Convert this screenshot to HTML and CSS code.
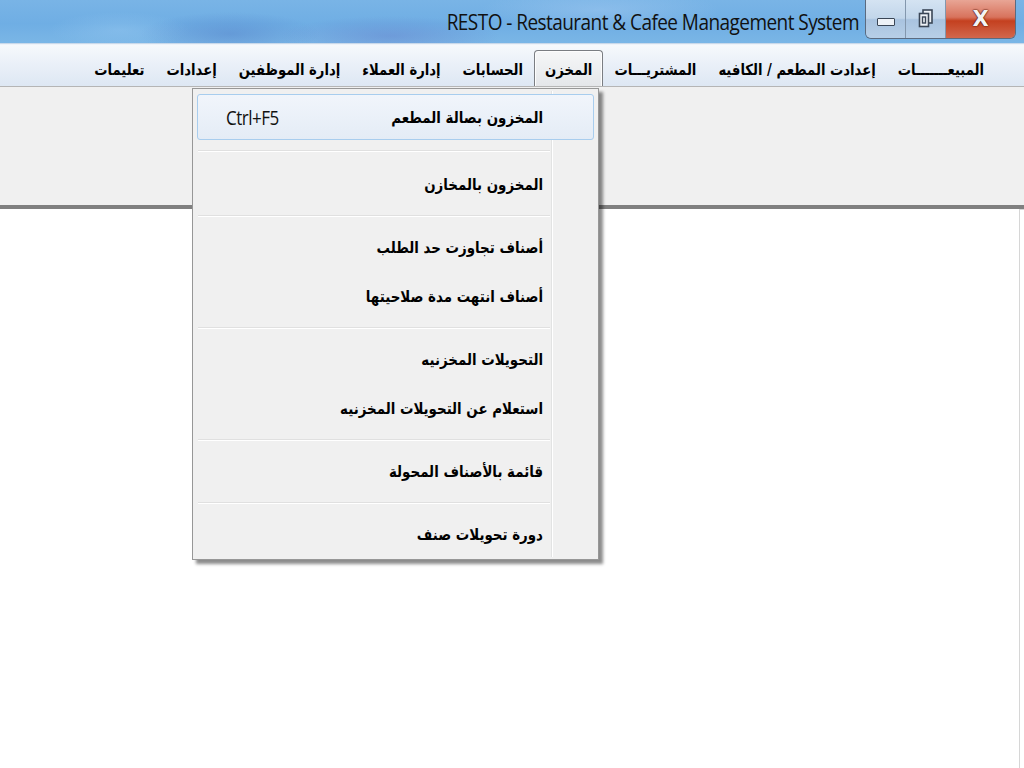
FILE: index.html
```html
<!DOCTYPE html>
<html>
<head>
<meta charset="utf-8">
<link rel="stylesheet" href="styles.css">
</head>
<body>
<div class="screen">
  <div class="titlebar">
    <div class="title">RESTO - Restaurant &amp; Cafee Management System</div>
    <div class="winbtns">
      <div class="wb wb-min"><span class="min-glyph"></span></div>
      <div class="wb wb-max">
        <svg width="16" height="20" viewBox="0 0 16 20"><rect x="5" y="1" width="9" height="13" fill="#eef2f7" stroke="#3a4656" stroke-width="1.6"/><rect x="1.5" y="4.5" width="9" height="13" fill="#eef2f7" stroke="#3a4656" stroke-width="1.6"/><rect x="4.5" y="8" width="3" height="6" fill="none" stroke="#3a4656" stroke-width="1.4"/></svg>
      </div>
      <div class="wb wb-close"><span class="x-glyph">X</span></div>
    </div>
  </div>
  <div class="menubar" dir="rtl">
    <span class="mi"><span class="mt">المبيعـــــــات</span></span>
    <span class="mi"><span class="mt">إعدادت المطعم / الكافيه</span></span>
    <span class="mi"><span class="mt">المشتريـــات</span></span>
    <span class="mi mi-active"><span class="mt">المخزن</span></span>
    <span class="mi"><span class="mt">الحسابات</span></span>
    <span class="mi"><span class="mt">إدارة العملاء</span></span>
    <span class="mi"><span class="mt">إدارة الموظفين</span></span>
    <span class="mi"><span class="mt">إعدادات</span></span>
    <span class="mi"><span class="mt">تعليمات</span></span>
  </div>
  <div class="toolarea"></div>
  <div class="content"></div>

  <div class="dropdown" dir="rtl">
    <div class="gutter"></div>
    <div class="item item-hot"><span class="lbl">المخزون بصالة المطعم</span><span class="key">Ctrl+F5</span></div>
    <div class="sep sep-a"></div>
    <div class="item"><span class="lbl">المخزون بالمخازن</span></div>
    <div class="sep"></div>
    <div class="item"><span class="lbl">أصناف تجاوزت حد الطلب</span></div>
    <div class="item"><span class="lbl">أصناف انتهت مدة صلاحيتها</span></div>
    <div class="sep"></div>
    <div class="item"><span class="lbl">التحويلات المخزنيه</span></div>
    <div class="item"><span class="lbl">استعلام عن التحويلات المخزنيه</span></div>
    <div class="sep"></div>
    <div class="item"><span class="lbl">قائمة بالأصناف المحولة</span></div>
    <div class="sep"></div>
    <div class="item"><span class="lbl">دورة تحويلات صنف</span></div>
  </div>
</div>
</body>
</html>
```

FILE: styles.css
```css
html, body {
  margin: 0;
  padding: 0;
  background: #ffffff;
}
.screen {
  position: relative;
  width: 1024px;
  height: 768px;
  overflow: hidden;
  display: flex;
  flex-direction: column;
  font-family: "DejaVu Sans", "Liberation Sans", sans-serif;
}
.titlebar {
  height: 43px;
  flex: none;
  display: flex;
  justify-content: flex-end;
  align-items: flex-start;
  padding-right: 8px;
  border-bottom: 1px solid #c9d9ea;
  background:
    radial-gradient(ellipse 90px 22px at 230px 34px, rgba(70,110,190,0.35), rgba(70,110,190,0) 100%),
    radial-gradient(ellipse 110px 20px at 390px 36px, rgba(90,100,190,0.30), rgba(90,100,190,0) 100%),
    radial-gradient(ellipse 70px 18px at 120px 30px, rgba(150,200,240,0.45), rgba(150,200,240,0) 100%),
    radial-gradient(ellipse 120px 20px at 600px 10px, rgba(160,200,240,0.5), rgba(160,200,240,0) 100%),
    linear-gradient(to bottom, #79b4e6 0%, #6faee4 55%, #7ab6e6 100%);
}
.title {
  font-family: "Open Sans", "Liberation Sans", sans-serif;
  font-size: 19px;
  letter-spacing: -0.55px;
  color: #111;
  margin-top: 9px;
  margin-right: 6px;
  transform: scaleY(1.12);
}
.winbtns {
  display: flex;
  height: 38px;
  border: 1px solid #5b6b80;
  border-top: none;
  border-radius: 0 0 6px 6px;
  overflow: hidden;
}
.wb {
  height: 38px;
  display: flex;
  align-items: center;
  justify-content: center;
}
.wb-min, .wb-max {
  width: 39px;
  background: linear-gradient(to bottom, #d4e3f2 0%, #c2d6ea 48%, #a9c3df 52%, #b7cfe7 100%);
  border-right: 1px solid #8397ad;
}
.min-glyph {
  width: 16px;
  height: 6px;
  margin-top: 6px;
  background: #eef2f7;
  border: 1.5px solid #3a4656;
  border-radius: 1px;
}
.wb-close {
  width: 69px;
  background: linear-gradient(to bottom, #e8a595 0%, #d8735d 45%, #c4401f 55%, #d2674c 100%);
}
.x-glyph {
  font-family: "DejaVu Sans", sans-serif;
  font-weight: bold;
  font-size: 21px;
  color: #f4f4f4;
  text-shadow: 0 0 2px #5a1a0c, 0 0 1px #5a1a0c, 0 0 1px #5a1a0c;
}
.menubar {
  height: 43px;
  flex: none;
  display: flex;
  align-items: flex-end;
  padding-right: 29px;
  background: linear-gradient(to bottom, #f6f9fc 0%, #eaf0f8 45%, #dde7f3 100%);
  box-sizing: border-box;
  border-top: 1px solid #eef3f9;
}
.mi {
  font-weight: bold;
  font-size: 13.2px;
  color: #000;
  padding: 0 10px;
  height: 37px;
  line-height: 37px;
  box-sizing: border-box;
  border: 1px solid transparent;
  border-bottom: none;
  white-space: nowrap;
}
.mt {
  display: inline-block;
  transform: scaleY(1.15);
}
.mi-active {
  background: linear-gradient(to bottom, #f6f7f8, #e4e6e9);
  border: 1px solid #7a7d82;
  border-bottom: none;
  border-radius: 4px 4px 0 0;
  box-shadow: inset 0 0 0 1px #fdfdfd;
}
.toolarea {
  height: 118px;
  flex: none;
  background: #f0f0f0;
  border-bottom: 4px solid #808080;
  box-shadow: 0 -1px 0 #b5b5b5, 0 1px 0 #d7d7d7;
}
.content {
  flex: 1;
  background: #fff;
  border-right: 1px solid #d6d6d6;
  margin-right: 4px;
}
.dropdown {
  position: absolute;
  left: 192px;
  top: 88px;
  width: 407px;
  box-sizing: border-box;
  background: #f0f0f0;
  border: 1px solid #979797;
  padding: 5px 4px 0 4px;
  box-shadow: 4px 4px 3px rgba(0,0,0,0.45);
}
.gutter {
  position: absolute;
  top: 2px;
  bottom: 2px;
  left: 358px;
  width: 1px;
  background: #e2e3e3;
  border-right: 1px solid #ffffff;
}
.item {
  position: relative;
  height: 49px;
  display: flex;
  align-items: center;
  padding-right: 50px;
  padding-left: 28px;
  box-sizing: border-box;
  border: 1px solid transparent;
}
.item-hot {
  height: 46px;
  border: 1px solid #a8cdee;
  border-radius: 3px;
  background: linear-gradient(to bottom, #f1f5fb, #e4ecf6);
}
.lbl {
  font-weight: bold;
  font-size: 13.4px;
  color: #000;
  white-space: nowrap;
  display: inline-block;
  transform: scaleY(1.15);
  margin-left: auto;
}
.item-hot .lbl {
  margin-left: 0;
  flex: 1;
}
.key {
  font-family: "Open Sans", "Liberation Sans", sans-serif;
  font-size: 17px;
  letter-spacing: -0.5px;
  color: #111;
  transform: scaleY(1.12);
}
.sep {
  height: 14px;
  position: relative;
  margin-left: 1px;
  margin-right: 44px;
}
.sep::after {
  content: "";
  position: absolute;
  left: 0;
  right: 0;
  top: 6px;
  height: 1px;
  background: #e0e0e0;
  border-bottom: 1px solid #ffffff;
}
.sep-a {
  height: 20px;
}
.sep-a::after {
  top: 10px;
}
```
